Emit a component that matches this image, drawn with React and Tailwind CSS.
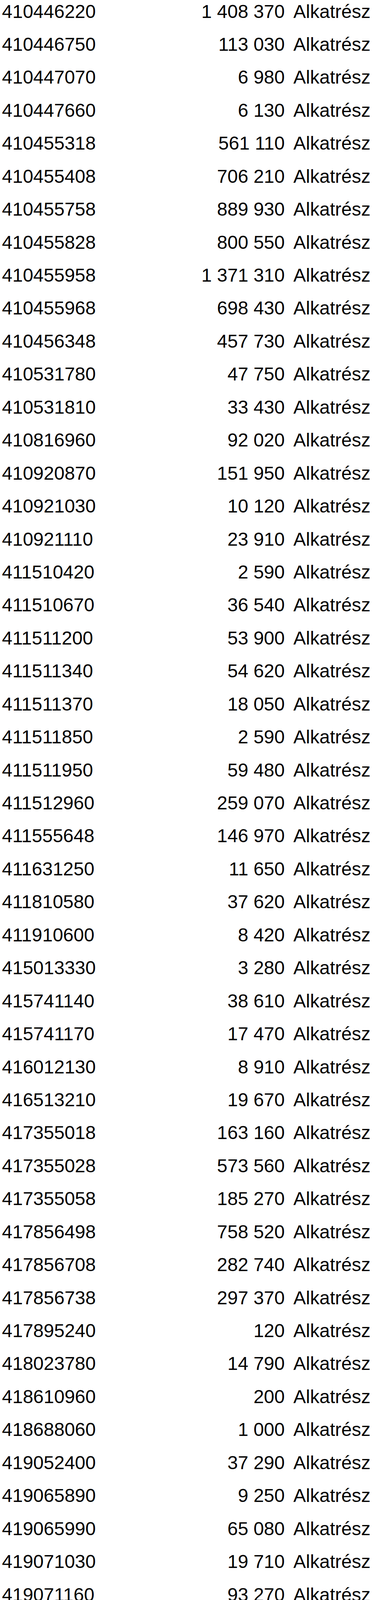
const rows = [
  ["410446220", "1 408 370"],
  ["410446750", "113 030"],
  ["410447070", "6 980"],
  ["410447660", "6 130"],
  ["410455318", "561 110"],
  ["410455408", "706 210"],
  ["410455758", "889 930"],
  ["410455828", "800 550"],
  ["410455958", "1 371 310"],
  ["410455968", "698 430"],
  ["410456348", "457 730"],
  ["410531780", "47 750"],
  ["410531810", "33 430"],
  ["410816960", "92 020"],
  ["410920870", "151 950"],
  ["410921030", "10 120"],
  ["410921110", "23 910"],
  ["411510420", "2 590"],
  ["411510670", "36 540"],
  ["411511200", "53 900"],
  ["411511340", "54 620"],
  ["411511370", "18 050"],
  ["411511850", "2 590"],
  ["411511950", "59 480"],
  ["411512960", "259 070"],
  ["411555648", "146 970"],
  ["411631250", "11 650"],
  ["411810580", "37 620"],
  ["411910600", "8 420"],
  ["415013330", "3 280"],
  ["415741140", "38 610"],
  ["415741170", "17 470"],
  ["416012130", "8 910"],
  ["416513210", "19 670"],
  ["417355018", "163 160"],
  ["417355028", "573 560"],
  ["417355058", "185 270"],
  ["417856498", "758 520"],
  ["417856708", "282 740"],
  ["417856738", "297 370"],
  ["417895240", "120"],
  ["418023780", "14 790"],
  ["418610960", "200"],
  ["418688060", "1 000"],
  ["419052400", "37 290"],
  ["419065890", "9 250"],
  ["419065990", "65 080"],
  ["419071030", "19 710"],
  ["419071160", "93 270"],
  ["419071520", "34 560"],
  ["419988060", "1 400"],
  ["421312720", "1 710"],
  ["421314160", "110 220"],
  ["421515370", "120"],
  ["421711280", "111 480"],
];

export default function App() {
  return (
    <div
      className="w-[960px] h-[4610px] overflow-hidden bg-white text-black text-[48px] leading-[48px]"
      style={{ fontFamily: '"Liberation Sans", Arial, sans-serif' }}
    >
      {rows.map(([code, amount]) => (
        <div key={code} className="flex h-[84.44px] pt-[5.5px] pl-[5px] whitespace-nowrap">
          <div className="flex w-[724px] justify-between">
            <span>{code}</span>
            <span>{amount}</span>
          </div>
          <span className="ml-[22px]">Alkatrész</span>
        </div>
      ))}
    </div>
  );
}
